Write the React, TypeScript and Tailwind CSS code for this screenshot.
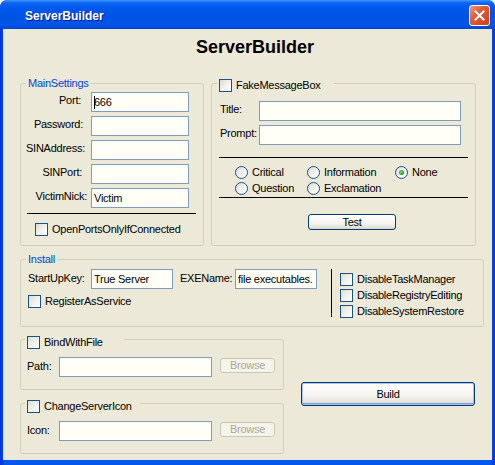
import type { ReactNode } from "react";

// ─── XP-style primitives ─────────────────────────────────────────
function CheckBox({ label }: { label?: string }) {
  return (
    <div className="flex items-center gap-[4px] h-[13px]">
      <span className="w-[13px] h-[13px] shrink-0 border border-[#1C5180] bg-[linear-gradient(135deg,#DCDCD7_0%,#F4F4F0_60%,#FFFFFF_100%)]" />
      {label && <span className="leading-[13px] whitespace-nowrap">{label}</span>}
    </div>
  );
}

function Radio({ label, checked }: { label: string; checked?: boolean }) {
  return (
    <div className="flex items-center gap-[4px] h-[13px]">
      <span className="w-[13px] h-[13px] shrink-0 rounded-full border border-[#1C5180] bg-[linear-gradient(135deg,#DCDCD7_0%,#F4F4F0_60%,#FFFFFF_100%)] flex items-center justify-center">
        {checked && (
          <span className="w-[5px] h-[5px] rounded-full bg-[radial-gradient(circle_at_40%_40%,#8BE08B_0%,#21A121_60%,#1A8A1A_100%)]" />
        )}
      </span>
      <span className="leading-[13px] whitespace-nowrap">{label}</span>
    </div>
  );
}

function TextBox({ className, children }: { className: string; children?: ReactNode }) {
  return (
    <div
      className={`h-[20px] shrink-0 border border-[#7F9DB9] bg-[#FFFFF7] pl-[2px] flex items-center leading-none overflow-hidden whitespace-nowrap ${className}`}
    >
      {children}
    </div>
  );
}

function Legend({ children }: { children: ReactNode }) {
  return (
    <span className="absolute left-[5px] top-[-7px] px-[2px] bg-[#ECE9D8] text-[#0046D5] leading-[13px]">
      {children}
    </span>
  );
}

const MAIN_ROWS = [
  { label: "Port:", pad: "pr-[10px]", value: "666", caret: true },
  { label: "Password:", pad: "pr-[8px]", value: "" },
  { label: "SINAddress:", pad: "pr-[6px]", value: "" },
  { label: "SINPort:", pad: "pr-[9px]", value: "" },
  { label: "VictimNick:", pad: "pr-[4px]", value: "Victim" },
];

export default function App() {
  return (
    <div className="w-[495px] h-[465px] bg-white font-['Liberation_Sans',Arial,sans-serif] text-[11px] tracking-[-0.25px] text-black">
      <div className="w-[495px] h-[465px] rounded-t-[7px] bg-[linear-gradient(to_right,#0831D9_0%,#0058EE_1%,#0058EE_99%,#0831D9_100%)] flex flex-col overflow-hidden">
        {/* ── Title bar ─────────────────────── */}
        <div className="h-[29px] shrink-0 flex items-center pl-[25px] pr-[5px] pt-[2px] bg-[linear-gradient(to_bottom,#3D95FF_0%,#0A66F4_10%,#0058EE_25%,#0054E3_55%,#0055EA_85%,#0046D0_100%)]">
          <span className="font-bold text-[12px] tracking-normal text-white [text-shadow:1px_1px_0_#0A1883]">ServerBuilder</span>
          <div className="ml-auto w-[21px] h-[21px] rounded-[3px] border border-white bg-[linear-gradient(135deg,#F0987A_0%,#E25A36_40%,#C8401C_100%)] flex items-center justify-center">
            <svg width="11" height="11" viewBox="0 0 11 11">
              <path d="M1.5 1.5 L9.5 9.5 M9.5 1.5 L1.5 9.5" stroke="white" strokeWidth="2" strokeLinecap="square" />
            </svg>
          </div>
        </div>

        {/* ── Client area ───────────────────── */}
        <div className="mx-[3px] h-[431px] shrink-0 bg-[#ECE9D8]">
          <div className="h-[54px] pl-[15px] pt-[8px] text-center">
            <span className="font-bold text-[18px] tracking-normal leading-[20px]">ServerBuilder</span>
          </div>

          <div className="pl-[17px]">
            {/* Row 1 */}
            <div className="flex gap-[7px]">
              {/* MainSettings */}
              <div className="relative w-[184px] h-[163px] rounded-[3px] border border-[#D0D0BF]">
                <Legend>MainSettings</Legend>
                <div className="flex flex-col gap-[4px] pt-[8px]">
                  {MAIN_ROWS.map((r) => (
                    <div key={r.label} className="flex">
                      <span className={`w-[70px] text-right leading-[13px] mt-[2px] whitespace-nowrap ${r.pad}`}>
                        {r.label}
                      </span>
                      <TextBox className="w-[98px]">
                        {r.caret && <span className="w-px h-[13px] bg-black mr-[-1px]" />}
                        {r.value}
                      </TextBox>
                    </div>
                  ))}
                </div>
                <div className="mt-[5px] ml-[6px] w-[169px] h-px bg-black" />
                <div className="mt-[9px] ml-[14px]">
                  <CheckBox label="OpenPortsOnlyIfConnected" />
                </div>
              </div>

              {/* FakeMessageBox */}
              <div className="relative w-[265px] h-[163px] rounded-[3px] border border-[#D0D0BF]">
                <div className="absolute left-[5px] top-[-5px] w-[117px] pl-[2px] bg-[#ECE9D8]">
                  <CheckBox label="FakeMessageBox" />
                </div>
                <div className="flex flex-col gap-[4px] pt-[17px] pl-[8px]">
                  <div className="flex">
                    <span className="w-[39px] leading-[13px] mt-[2px]">Title:</span>
                    <TextBox className="w-[202px]" />
                  </div>
                  <div className="flex">
                    <span className="w-[39px] leading-[13px] mt-[2px]">Prompt:</span>
                    <TextBox className="w-[202px]" />
                  </div>
                </div>
                <div className="mt-[12px] ml-[7px] w-[249px] h-px bg-black" />
                <div className="mt-[8px] ml-[23px] grid grid-cols-[72px_88px_auto] gap-y-[3px]">
                  <Radio label="Critical" />
                  <Radio label="Information" />
                  <Radio label="None" checked />
                  <Radio label="Question" />
                  <Radio label="Exclamation" />
                </div>
                <div className="mt-[2px] ml-[7px] w-[249px] h-px bg-black" />
                <button className="mt-[16px] ml-[96px] w-[88px] h-[16px] rounded-[3px] border border-[#003C74] bg-[linear-gradient(to_bottom,#FFFFFF_0%,#F4F3EE_60%,#E3E0D6_90%,#D6D0C5_100%)] flex items-center justify-center leading-none">
                  Test
                </button>
              </div>
            </div>

            {/* Install */}
            <div className="relative mt-[13px] w-[464px] h-[68px] rounded-[3px] border border-[#D0D0BF] flex">
              <Legend>Install</Legend>
              <div className="w-[310px] pt-[9px]">
                <div className="flex pl-[7px]">
                  <span className="w-[63px] leading-[13px] mt-[3px]">StartUpKey:</span>
                  <TextBox className="w-[82px]">True Server</TextBox>
                  <span className="ml-[7px] w-[55px] leading-[13px] mt-[3px]">EXEName:</span>
                  <TextBox className="w-[82px]">file executables.</TextBox>
                </div>
                <div className="mt-[6px] ml-[7px]">
                  <CheckBox label="RegisterAsService" />
                </div>
              </div>
              <div className="mt-[9px] w-px h-[48px] bg-black" />
              <div className="ml-[8px] pt-[13px] flex flex-col gap-[3px]">
                <CheckBox label="DisableTaskManager" />
                <CheckBox label="DisableRegistryEditing" />
                <CheckBox label="DisableSystemRestore" />
              </div>
            </div>

            {/* Bottom row */}
            <div className="mt-[12px] flex items-start">
              <div className="w-[264px] flex flex-col gap-[13px]">
                {[
                  { legend: "BindWithFile", label: "Path:", lw: "w-[99px]" },
                  { legend: "ChangeServerIcon", label: "Icon:", lw: "w-[115px]" },
                ].map((g) => (
                  <div key={g.legend} className="relative h-[51px] rounded-[3px] border border-[#D0D0BF]">
                    <div className={`absolute left-[4px] top-[-4px] pl-[2px] bg-[#ECE9D8] ${g.lw}`}>
                      <CheckBox label={g.legend} />
                    </div>
                    <div className="flex pt-[17px]">
                      <span className="w-[38px] pl-[6px] leading-[13px] mt-[3px]">{g.label}</span>
                      <TextBox className="w-[153px]" />
                      <div className="ml-[8px] mt-[1px] w-[55px] h-[15px] rounded-[3px] border border-[#C9C7BA] bg-[#F5F4EA] text-[#ACA899] flex items-center justify-center leading-none">
                        Browse
                      </div>
                    </div>
                  </div>
                ))}
              </div>
              <button className="ml-[17px] mt-[43px] w-[174px] h-[24px] rounded-[3px] border border-[#003C74] bg-[linear-gradient(to_bottom,#FFFFFF_0%,#F4F3EE_60%,#E3E0D6_90%,#D6D0C5_100%)] shadow-[inset_0_0_0_1px_#A9C2F2,inset_0_-2px_0_0_#7C9DE6] flex items-center justify-center leading-none">
                Build
              </button>
            </div>
          </div>
        </div>
      </div>
    </div>
  );
}
